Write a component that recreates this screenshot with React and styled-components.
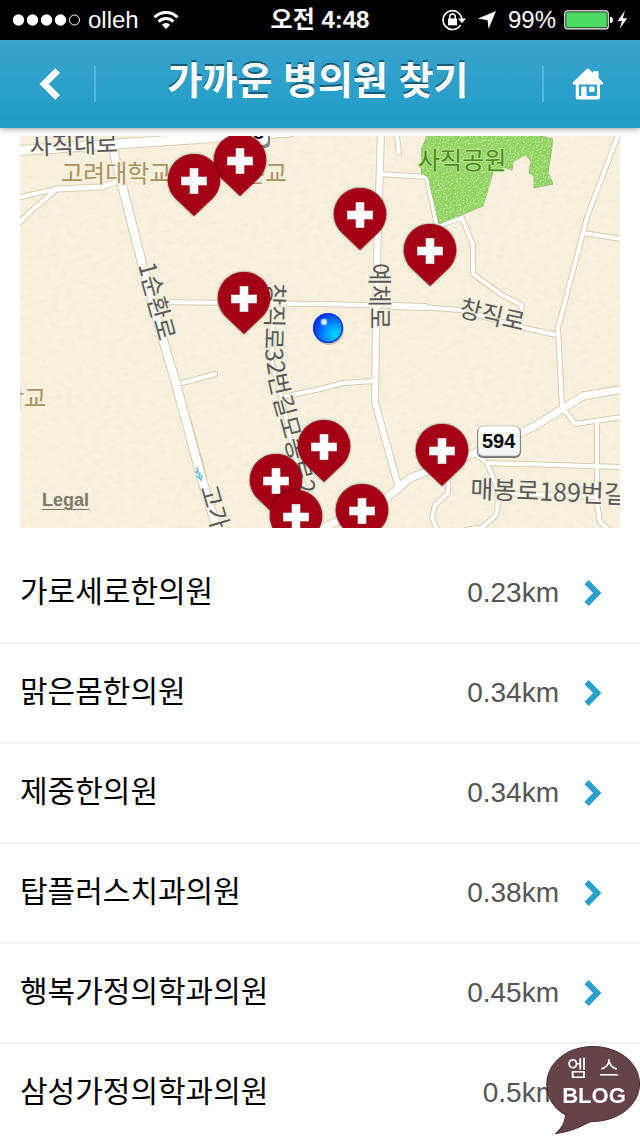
import styled, { createGlobalStyle } from "styled-components"

const GlobalStyle = createGlobalStyle`
  * {
    box-sizing: border-box;
  }
  body {
    margin: 0;
    background-color: #ffffff;
    font-family: "Liberation Sans", "Noto Sans CJK KR", sans-serif;
  }
  button {
    border: 0;
    padding: 0;
    background: none;
    cursor: pointer;
  }
`;

const Page = styled.div`
  height: 100vh;
  display: flex;
  flex-direction: column;
  overflow: hidden;
`;

const StatusBar = styled.div`
  flex: none;
  height: 40px;
  padding: 0 12px;
  display: grid;
  grid-template-columns: 1fr auto 1fr;
  align-items: center;
  background-color: #000000;
  color: #ffffff;
  font-size: 24px;
  line-height: 40px;
  svg {
    display: block;
  }
`;

const StatusLeft = styled.div`
  display: flex;
  align-items: center;
  gap: 8px;
  .wifi {
    margin-left: 6px;
  }
`;

const StatusRight = styled.div`
  display: flex;
  align-items: center;
  justify-content: flex-end;
  gap: 8px;
  .arrow {
    margin: 0 4px;
  }
`;

const Clock = styled.div`
  font-weight: 600;
`;

const HeaderCss = styled.header`
  flex: none;
  position: relative;
  height: 88px;
  display: flex;
  align-items: center;
  background: linear-gradient(#39a4cd, #209cc7);
  box-shadow: 0 2px 5px rgba(0, 0, 0, 0.3);
  h1 {
    flex: 1;
    margin: 0;
    padding: 0 2px 6px 0;
    text-align: center;
    color: #ffffff;
    font-size: 38px;
    line-height: 56px;
    font-weight: 700;
    text-shadow: 0 -2px 0 #195a73;
  }
`;

const HeaderButton = styled.button`
  width: ${(props) => (props.$side === "left" ? "96px" : "98px")};
  height: 36px;
  display: flex;
  align-items: center;
  justify-content: center;
  border-right: ${(props) => (props.$side === "left" ? "2px solid #55b8dc" : "0")};
  border-left: ${(props) => (props.$side === "right" ? "2px solid #55b8dc" : "0")};
  padding: ${(props) => (props.$side === "left" ? "0 0 0 6px" : "0 8px 0 0")};
`;

const Content = styled.main`
  flex: 1;
  min-height: 0;
  padding-top: 8px;
  overflow-y: auto;
  scrollbar-width: none;
`;

const MapBox = styled.section`
  position: relative;
  margin: 0 20px 16px;
  aspect-ratio: 600 / 392;
  overflow: hidden;
  background-color: #f8f1de;
`;

const MapSvg = styled.svg`
  display: block;
  width: 100%;
  height: 100%;
  text {
    font-family: "Noto Sans CJK KR", sans-serif;
    font-size: 24px;
    fill: #58585a;
    stroke: #f8f1de;
    stroke-width: 2px;
    paint-order: stroke;
  }
  .wide {
    font-size: 25px;
  }
  .place {
    fill: #a8925f;
  }
  .park {
    fill: #4c8a1e;
    stroke: #b4e38d;
  }
  .shield {
    fill: #000000;
    stroke: none;
    font-family: "Liberation Sans", sans-serif;
    font-size: 20px;
    font-weight: 700;
  }
`;

const Pin = styled.button`
  position: absolute;
  left: calc(100% * ${(props) => props.$x} / 600);
  top: calc(100% * ${(props) => props.$y} / 392);
  width: 60px;
  height: 70px;
  margin: -32px 0 0 -30px;
  svg {
    display: block;
  }
`;

const LegalLink = styled.a`
  position: absolute;
  left: 22px;
  bottom: 17px;
  color: #7b776d;
  font-size: 18px;
  line-height: 22px;
  font-weight: 700;
  text-decoration: underline;
  text-underline-offset: 3px;
  text-decoration-thickness: 1px;
`;

const ListCss = styled.ul`
  margin: 0;
  padding: 0;
  list-style-type: none;
`;

const Row = styled.li`
  height: 100px;
  border-bottom: 2px solid #f3f3f3;
  a {
    height: 100%;
    padding: 0 38px 0 20px;
    display: flex;
    align-items: center;
    color: #000000;
    text-decoration: none;
  }
  svg {
    display: block;
    flex: none;
  }
`;

const ClinicName = styled.span`
  flex: 1;
  padding-bottom: 2px;
  font-size: 30px;
  line-height: 44px;
`;

const Distance = styled.span`
  margin-right: 25px;
  color: #555555;
  font-size: 28px;
  line-height: 44px;
`;

const BlogBadge = styled.div`
  position: fixed;
  right: 0;
  bottom: 0;
  svg {
    display: block;
  }
`;

const roads = [
  { w: 4, d: "M20 197L57 189L30 212L16 226" },
  { w: 4, d: "M182 383L215 374" },
  { w: 4, d: "M150 302L244 303L320 304L400 306" },
  { w: 4, d: "M273 303L272 363L282 400L293 450L305 490L314 530" },
  { w: 4, d: "M283 397L320 389L343 383L374 381" },
  { w: 4, d: "M396 130L399 153" },
  { w: 4, d: "M380 174L427 177L437 226L462 218L473 245L473 274L502 295L522 305L517 326" },
  { w: 4, d: "M420 307L460 310L520 327L557 335" },
  { w: 4, d: "M620 130L587 217L583 233L558 328L562 407L575 424L622 417" },
  { w: 4, d: "M583 233L622 239" },
  { w: 4, d: "M597 422L597 503L600 522L612 532" },
  { w: 4, d: "M478 456L487 463L497 487L499 498L496 515L483 527L466 530" },
  { w: 4, d: "M487 463L622 467" },
  { w: 4, d: "M500 493L597 497" },
  { w: 4, d: "M448 477L448 493L435 505L432 518L438 532" },
  { w: 5, d: "M57 189L100 187L120 181" },
  { w: 6, d: "M392 306L425 307" },
  { w: 6, d: "M381 130L377 263L376 330L375 402L398 485" },
  { w: 8, d: "M112 146L122 185L143 267L163 340L177 387L200 473L218 532" },
  { w: 7, d: "M310 534L387 498L410 478L470 455L533 427L583 396L624 389" },
  { w: 9, d: "M14 151L117 144L220 137L290 132" },
]

const pins = [
  { x: 220, y: 25 },
  { x: 174, y: 45 },
  { x: 340, y: 79 },
  { x: 410, y: 115 },
  { x: 224, y: 163 },
  { x: 304, y: 311 },
  { x: 422, y: 315 },
  { x: 256, y: 345 },
  { x: 342, y: 375 },
  { x: 276, y: 381 },
]

const clinics = [
  { name: "가로세로한의원", distance: "0.23km" },
  { name: "맑은몸한의원", distance: "0.34km" },
  { name: "제중한의원", distance: "0.34km" },
  { name: "탑플러스치과의원", distance: "0.38km" },
  { name: "행복가정의학과의원", distance: "0.45km" },
  { name: "삼성가정의학과의원", distance: "0.5km" },
]

const Status = () => {
  return (
    <StatusBar>
      <StatusLeft>
        <svg width="68" height="12" viewBox="0 0 68 12" fill="#fff">
          <circle cx="6.5" cy="6" r="5.7" />
          <circle cx="20.5" cy="6" r="5.7" />
          <circle cx="34.5" cy="6" r="5.7" />
          <circle cx="48.5" cy="6" r="5.7" />
          <circle cx="62.5" cy="6" r="5" fill="none" stroke="#fff" />
        </svg>
        <span>olleh</span>
        <svg className="wifi" width="26" height="20" viewBox="0 0 26 20" fill="none" stroke="#fff" strokeWidth="3">
          <path d="M1.5 7.2A16.4 16.4 0 0 1 24.5 7.2" />
          <path d="M5.6 11.6A10.6 10.6 0 0 1 20.4 11.6" />
          <path d="M13 19L8.8 14.8A6 6 0 0 1 17.2 14.8Z" fill="#fff" stroke="none" />
        </svg>
      </StatusLeft>
      <Clock>오전 4:48</Clock>
      <StatusRight>
        <svg width="24" height="22" viewBox="0 0 24 22" fill="#fff">
          <path d="M18.6 15.8A9.4 9.4 0 1 1 19.8 10" fill="none" stroke="#fff" strokeWidth="1.6" />
          <path d="M16 9.6H24L20 14.2Z" />
          <rect x="6" y="9.5" width="9" height="6.8" />
          <path d="M7.8 10V7.6A2.7 2.7 0 0 1 13.2 7.6V10" fill="none" stroke="#fff" strokeWidth="1.5" />
        </svg>
        <svg className="arrow" width="18" height="18" viewBox="0 0 18 18" fill="#fff">
          <path d="M18 0L10.6 18L9.6 9.2L0 7.6Z" />
        </svg>
        <span>99%</span>
        <svg width="64" height="20" viewBox="0 0 64 20">
          <rect x="0.8" y="0.8" width="43.4" height="18" rx="2.6" fill="none" stroke="#fff" strokeWidth="1.2" />
          <rect x="2.2" y="2.2" width="40.6" height="15.2" rx="1" fill="#4cd964" />
          <path d="M46 6.4Q49 7 49 9.8T46 13.2Z" fill="#fff" />
          <path d="M61 0.5L53.6 11H58L55.6 19L63.2 8.2H58.8Z" fill="#fff" />
        </svg>
      </StatusRight>
    </StatusBar>
  )
}

const Header = () => {
  return (
    <HeaderCss>
      <HeaderButton $side="left" aria-label="뒤로">
        <svg width="22" height="32" viewBox="0 0 22 32" fill="none" stroke="#fff" strokeWidth="6.6">
          <path d="M18.6 2.6L5.2 16L18.6 29.4" />
        </svg>
      </HeaderButton>
      <h1>가까운 병의원 찾기</h1>
      <HeaderButton $side="right" aria-label="홈">
        <svg width="32" height="32" viewBox="0 0 32 32">
          <path
            fill="#fff"
            fillRule="evenodd"
            d="M15.8 0.5Q16.6 0.5 17.4 1.4L21 5V4Q21 3 22 3H25Q26.5 3 26.5 4.4V10L31 14.6Q31.8 16 30.4 16.6H28V29Q28 31.5 25.4 31.5H6.4Q3.8 31.5 3.8 29V16.6H1.4Q0 16 0.8 14.6L14.2 1.4Q15 0.5 15.8 0.5ZM7 16.6V28H9.2V19.6Q9.2 18.6 10.2 18.6H13.6Q14.6 18.6 14.6 19.6V28H25V16.6ZM18 18.6H21.6Q22.6 18.6 22.6 19.6V23Q22.6 24 21.6 24H18Q17 24 17 23V19.6Q17 18.6 18 18.6Z"
          />
        </svg>
      </HeaderButton>
    </HeaderCss>
  )
}

const ClinicMap = () => {
  return (
    <MapBox>
      <MapSvg viewBox="20 136 600 392">
        <defs>
          <filter id="paper" x="0" y="0" width="100%" height="100%">
            <feTurbulence type="fractalNoise" baseFrequency="0.12 0.2" numOctaves="3" seed="4" />
            <feColorMatrix values="0 0 0 0 0.7  0 0 0 0 0.6  0 0 0 0 0.35  0.6 0 0 0 -0.22" />
          </filter>
          <filter id="grass" x="0" y="0" width="100%" height="100%">
            <feTurbulence type="fractalNoise" baseFrequency="0.6" numOctaves="2" seed="2" result="noise" />
            <feColorMatrix values="0 0 0 0 0.72  0 0 0 0 0.91  0 0 0 0 0.5  1.6 0 0 0 -0.7" />
            <feComposite in2="SourceGraphic" operator="in" result="spots" />
            <feMerge>
              <feMergeNode in="SourceGraphic" />
              <feMergeNode in="spots" />
            </feMerge>
          </filter>
          <linearGradient id="shieldFill" x1="0" y1="0" x2="0" y2="1">
            <stop offset="0.5" stopColor="#fff" />
            <stop offset="1" stopColor="#f1f1f1" />
          </linearGradient>
          <radialGradient id="dotFill" cx="0.75" cy="0.72" r="0.75">
            <stop offset="0" stopColor="#00d8ff" />
            <stop offset="0.5" stopColor="#0090ff" />
            <stop offset="1" stopColor="#0038f0" />
          </radialGradient>
          <path id="ring1" d="M138 265L159 342L171 390" />
          <path id="changjik32" d="M267 283L265 345Q266 370 274 400L298 490L312 540" />
          <path id="goga" d="M200 488L218 550L232 600" />
        </defs>
        <rect x="20" y="136" width="600" height="392" filter="url(#paper)" opacity="0.4" />
        <g fill="none" stroke="#d6cfb4" strokeLinecap="round" strokeLinejoin="round">
          {roads.map((road) => <path key={road.d} d={road.d} strokeWidth={road.w + 2} />)}
        </g>
        <path d="M190 417L207 478" stroke="#d3cbae" strokeWidth="1" />
        <g fill="none" stroke="#ffffff" strokeLinecap="round" strokeLinejoin="round">
          {roads.map((road) => <path key={road.d} d={road.d} strokeWidth={road.w} />)}
        </g>
        <path
          d="M428 134L421 150V173L428 177L439 224L483 206L493 172L504 167L512 170L513 162L525 155L531 161L529 173L534 176V188L553 184L548 173L553 139L533 134Z"
          fill="#8bd35a"
          stroke="#93b877"
          filter="url(#grass)"
        />
        <path d="M197 467L198 471L196 472L200 474L199 478M197 476L201 480L202 475" fill="none" stroke="#62bdf5" strokeWidth="1.6" />
        <text x="30" y="155" transform="rotate(-2 30 155)">사직대로</text>
        <text className="place" x="61" y="182">고려대학교</text>
        <text className="place" x="243" y="182">은교</text>
        <text className="place" x="2" y="407">학교</text>
        <text className="park" x="418" y="169">사직공원</text>
        <text><textPath href="#ring1">1순환로</textPath></text>
        <text><textPath href="#changjik32">창직로32번길모종로2</textPath></text>
        <text><textPath href="#goga">고가차</textPath></text>
        <text transform="translate(371 263) rotate(90)">예체로</text>
        <text transform="translate(458 316) rotate(13)">창직로</text>
        <text className="wide" transform="translate(470 498) rotate(2)">매봉로189번길</text>
        <rect x="236" y="116" width="34" height="32" rx="5" fill="#808080" />
        <rect x="237" y="115" width="31" height="30" rx="5" fill="#fff" />
        <text className="shield" x="253" y="139">8</text>
        <rect x="477" y="426" width="44" height="32" rx="6" fill="#77756f" />
        <rect x="478" y="426" width="42" height="30" rx="5" fill="url(#shieldFill)" stroke="#aaa" strokeWidth="0.6" />
        <text className="shield" x="482" y="448">594</text>
        <circle cx="329" cy="330" r="15" fill="#9a9482" opacity="0.5" />
        <circle cx="328" cy="328" r="14.4" fill="url(#dotFill)" stroke="#0830dd" strokeWidth="1.4" />
        <circle cx="324" cy="322" r="3.4" fill="#b4e4ff" opacity="0.8" />
        <circle cx="324" cy="322" r="1.8" fill="#fff" />
      </MapSvg>
      {pins.map((pin) => (
        <Pin key={pin.x} $x={pin.x} $y={pin.y} aria-label="병의원">
          <svg width="60" height="70" viewBox="0 0 60 70">
            <path
              d="M30 5A26 26 0 0 0 11 49L30 67L49 49A26 26 0 0 0 30 5Z"
              fill="#a30015"
              style={{ filter: "drop-shadow(0 0 1px rgba(0, 0, 0, 0.6))" }}
            />
            <path d="M25.5 19H34.5V27.5H43V36.5H34.5V45H25.5V36.5H17V27.5H25.5Z" fill="#fff" stroke="#7d0010" strokeWidth="0.4" />
          </svg>
        </Pin>
      ))}
      <LegalLink href="#legal">Legal</LegalLink>
    </MapBox>
  )
}

const App = () => {
  return (
    <Page>
      <GlobalStyle />
      <Status />
      <Header />
      <Content>
        <ClinicMap />
        <ListCss>
          {clinics.map((clinic) => (
            <Row key={clinic.name}>
              <a href="#clinic">
                <ClinicName>{clinic.name}</ClinicName>
                <Distance>{clinic.distance}</Distance>
                <svg width="18" height="26" viewBox="0 0 18 26" fill="none" stroke="#2a9fca" strokeWidth="6">
                  <path d="M2.6 2.2L13.2 13L2.6 23.8" />
                </svg>
              </a>
            </Row>
          ))}
        </ListCss>
      </Content>
      <BlogBadge>
        <svg width="94" height="92" viewBox="0 0 94 92">
          <path
            d="M47 2.5C73 2.5 93.5 19 93.5 40C93.5 61 72 78 45 77.5C36 82 24 88 9.5 89.5C16 84 19 78 19.5 71C7 64 0.8 53 0.8 40C0.8 19 21 2.5 47 2.5Z"
            fill="#644448"
            stroke="#43292d"
            strokeWidth="1"
          />
          <g fill="#fff" fontSize="22">
            <text x="21" y="32" fontFamily="Noto Sans CJK KR, sans-serif">엠</text>
            <text x="53" y="32" fontFamily="Noto Sans CJK KR, sans-serif">스</text>
            <text x="48" y="59" fontWeight="700" textAnchor="middle" fontFamily="Liberation Sans, sans-serif">BLOG</text>
          </g>
        </svg>
      </BlogBadge>
    </Page>
  )
}
export default App
